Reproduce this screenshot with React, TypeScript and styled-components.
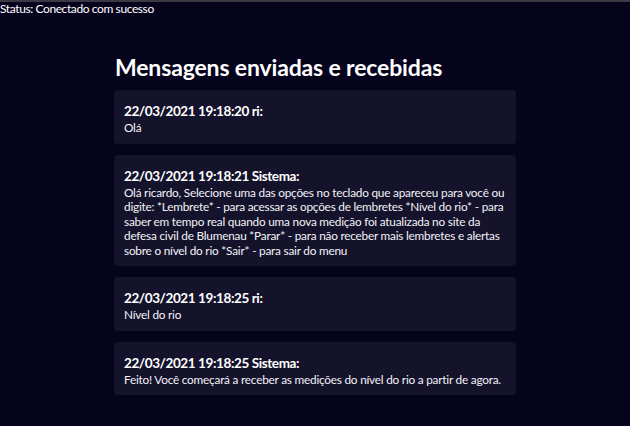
import * as React from "react";
import styled, { createGlobalStyle } from "styled-components";

const GlobalStyle = createGlobalStyle`
  html, body {
    margin: 0;
    padding: 0;
    background: #06031c;
  }
  body {
    font-family: "Lato", "Noto Sans", sans-serif;
    color: #ffffff;
    border-top: 2px solid #3b3a44;
    min-height: 424px;
    box-sizing: border-box;
  }
`;

const SStatus = styled.div`
  font-size: 12px;
  line-height: 14px;
  letter-spacing: -0.4px;
  color: #ffffff;
`;

const SMain = styled.main`
  width: 402px;
  margin: 0 auto;
  padding: 36px 0 0 0;
  display: flex;
  flex-direction: column;
  gap: 11px;
`;

const STitle = styled.h1`
  font-size: 23px;
  font-weight: 700;
  line-height: 30px;
  letter-spacing: -0.15px;
  margin: 0 0 -3px 1px;
`;

const SCard = styled.div`
  background: #15132c;
  border-radius: 4px;
  padding: 13px 10px 8px 10px;
`;

const SHeader = styled.div`
  font-size: 13.5px;
  font-weight: 700;
  line-height: 16px;
  letter-spacing: -0.4px;
`;

const SText = styled.div`
  margin-top: 2px;
  font-size: 11.8px;
  line-height: 14.5px;
  letter-spacing: -0.22px;
  white-space: pre-line;
  color: #f2f2f6;
`;

interface Message {
  time: string;
  from: string;
  text: string;
}

const messages: Message[] = [
  { time: "22/03/2021 19:18:20", from: "ri", text: "Olá" },
  {
    time: "22/03/2021 19:18:21",
    from: "Sistema",
    text: [
      "Olá ricardo, Selecione uma das opções no teclado que apareceu para você ou",
      "digite: *Lembrete* - para acessar as opções de lembretes *Nível do rio* - para",
      "saber em tempo real quando uma nova medição foi atualizada no site da",
      "defesa civil de Blumenau *Parar* - para não receber mais lembretes e alertas",
      "sobre o nível do rio *Sair* - para sair do menu",
    ].join("\n"),
  },
  { time: "22/03/2021 19:18:25", from: "ri", text: "Nível do rio" },
  {
    time: "22/03/2021 19:18:25",
    from: "Sistema",
    text: "Feito! Você começará a receber as medições do nível do rio a partir de agora.",
  },
];

export default function App() {
  return (
    <>
      <GlobalStyle />
      <SStatus>Status: Conectado com sucesso</SStatus>
      <SMain>
        <STitle>Mensagens enviadas e recebidas</STitle>
        {messages.map((m, i) => (
          <SCard key={i}>
            <SHeader>
              {m.time} {m.from}:
            </SHeader>
            <SText>{m.text}</SText>
          </SCard>
        ))}
      </SMain>
    </>
  );
}
